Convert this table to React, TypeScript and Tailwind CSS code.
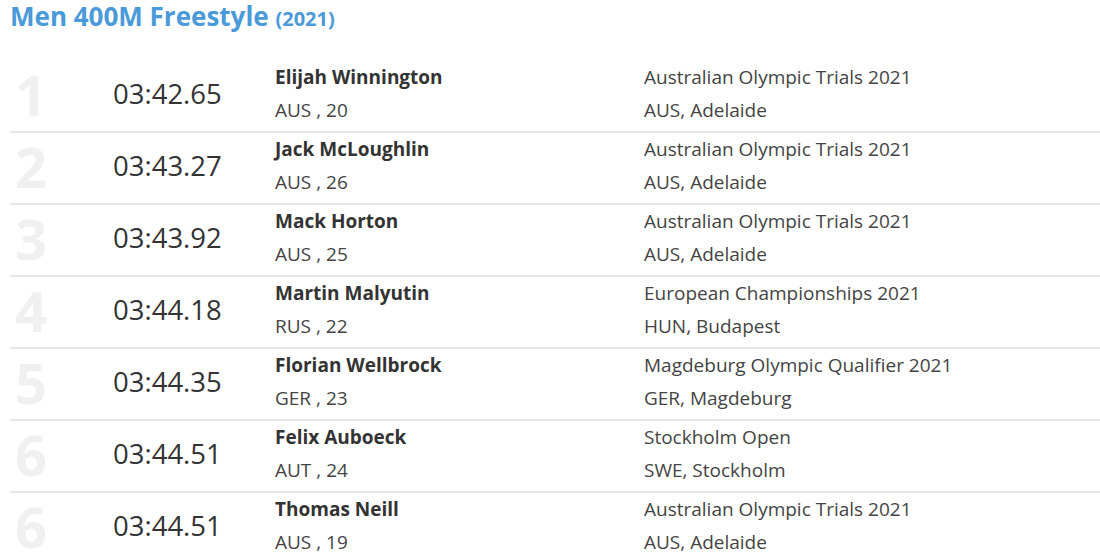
import React from 'react';

type Result = {
  rank: number;
  time: string;
  name: string;
  country: string;
  age: number;
  meet: string;
  place: string;
};

const results: Result[] = [
  { rank: 1, time: '03:42.65', name: 'Elijah Winnington', country: 'AUS', age: 20, meet: 'Australian Olympic Trials 2021', place: 'AUS, Adelaide' },
  { rank: 2, time: '03:43.27', name: 'Jack McLoughlin', country: 'AUS', age: 26, meet: 'Australian Olympic Trials 2021', place: 'AUS, Adelaide' },
  { rank: 3, time: '03:43.92', name: 'Mack Horton', country: 'AUS', age: 25, meet: 'Australian Olympic Trials 2021', place: 'AUS, Adelaide' },
  { rank: 4, time: '03:44.18', name: 'Martin Malyutin', country: 'RUS', age: 22, meet: 'European Championships 2021', place: 'HUN, Budapest' },
  { rank: 5, time: '03:44.35', name: 'Florian Wellbrock', country: 'GER', age: 23, meet: 'Magdeburg Olympic Qualifier 2021', place: 'GER, Magdeburg' },
  { rank: 6, time: '03:44.51', name: 'Felix Auboeck', country: 'AUT', age: 24, meet: 'Stockholm Open', place: 'SWE, Stockholm' },
  { rank: 6, time: '03:44.51', name: 'Thomas Neill', country: 'AUS', age: 19, meet: 'Australian Olympic Trials 2021', place: 'AUS, Adelaide' },
];

// one row of the ranking table
const ResultRow: React.FC<{ r: Result; last: boolean }> = ({ r, last }) => (
  <div className={`flex pb-[4px] ${last ? '' : 'border-b-2 border-[#e6e6e6]'}`}>
    <div className="w-[103px] flex items-center pl-[5px] text-[56px] font-bold leading-none text-[#f0f0f0]">
      {r.rank}
    </div>
    <div className="w-[162px] flex items-center text-[27.5px] text-[#333]">{r.time}</div>
    <div className="w-[369px] text-[19px] leading-[33px] text-[#444]">
      <div className="font-bold text-[#333]">{r.name}</div>
      <div>
        {r.country} , {r.age}
      </div>
    </div>
    <div className="flex-1 text-[19px] leading-[33px] text-[#444]">
      <div>{r.meet}</div>
      <div>{r.place}</div>
    </div>
  </div>
);

export default function App() {
  return (
    <div className="w-[1100px] h-[556px] overflow-hidden bg-white pl-[10px] font-['Open_Sans',sans-serif]">
      <h2 className="text-[26px] leading-[32px] font-bold text-[#4a9ad9]">
        Men 400M Freestyle <span className="text-[20px]">(2021)</span>
      </h2>
      <div className="mt-[26px]">
        {results.map((r, i) => (
          <ResultRow key={i} r={r} last={i === results.length - 1} />
        ))}
      </div>
    </div>
  );
}
